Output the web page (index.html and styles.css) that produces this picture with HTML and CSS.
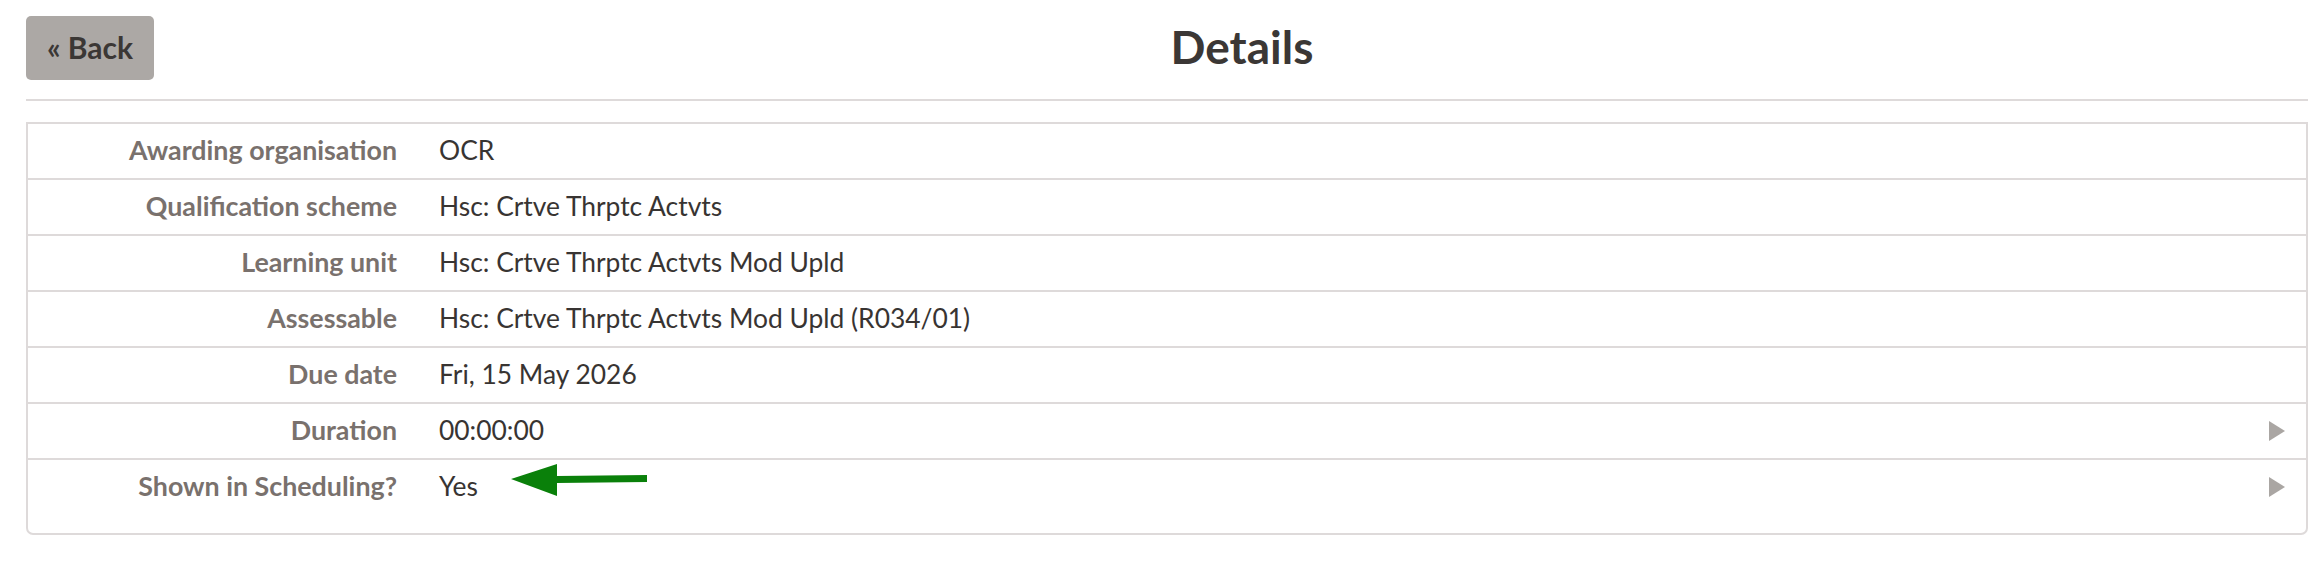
FILE: index.html
```html
<!DOCTYPE html>
<html lang="en">
<head>
<meta charset="utf-8">
<title>Details</title>
<link rel="stylesheet" href="styles.css">
</head>
<body>
<div class="page">
  <header class="header">
    <a class="back-btn" href="#">« Back</a>
    <h1 class="title">Details</h1>
  </header>
  <hr class="divider">
  <div class="details">
    <div class="row">
      <div class="label">Awarding organisation</div>
      <div class="value">OCR</div>
      <div class="action"></div>
    </div>
    <div class="row">
      <div class="label">Qualification scheme</div>
      <div class="value">Hsc: Crtve Thrptc Actvts</div>
      <div class="action"></div>
    </div>
    <div class="row">
      <div class="label">Learning unit</div>
      <div class="value">Hsc: Crtve Thrptc Actvts Mod Upld</div>
      <div class="action"></div>
    </div>
    <div class="row">
      <div class="label">Assessable</div>
      <div class="value">Hsc: Crtve Thrptc Actvts Mod Upld (R034/01)</div>
      <div class="action"></div>
    </div>
    <div class="row">
      <div class="label">Due date</div>
      <div class="value">Fri, 15 May 2026</div>
      <div class="action"></div>
    </div>
    <div class="row">
      <div class="label">Duration</div>
      <div class="value">00:00:00</div>
      <div class="action"><svg class="tri" width="16" height="20" viewBox="0 0 16 20"><polygon points="0,0 16,10 0,20"/></svg></div>
    </div>
    <div class="row row-last">
      <div class="label">Shown in Scheduling?</div>
      <div class="value">Yes</div>
      <div class="action"><svg class="tri" width="16" height="20" viewBox="0 0 16 20"><polygon points="0,0 16,10 0,20"/></svg></div>
      <svg class="annot-arrow" width="138" height="34" viewBox="0 0 138 34"><polygon points="0,16 46,1 46,13 136,12 136,19 46,20 46,33"/></svg>
    </div>
  </div>
</div>
</body>
</html>
```

FILE: styles.css
```css
html, body {
  margin: 0;
  padding: 0;
  background: #ffffff;
}

body {
  font-family: "Lato", "Noto Sans", sans-serif;
  color: #383432;
}

.page {
  padding: 16px 10px 0 26px;
}

.header {
  display: flex;
  align-items: center;
  height: 64px;
}

.back-btn {
  display: flex;
  align-items: center;
  justify-content: center;
  box-sizing: border-box;
  width: 128px;
  height: 64px;
  padding-bottom: 2px;
  background: #aca8a5;
  border-radius: 5px;
  color: #3b3735;
  font-size: 30px;
  font-weight: 700;
  text-decoration: none;
}

.title {
  flex: 1;
  margin: 0;
  padding: 0 0 3px 22px;
  text-align: center;
  font-size: 46px;
  font-weight: 700;
  color: #3b3735;
}

.divider {
  margin: 19px 0 0 0;
  border: 0;
  height: 2px;
  background: #dedada;
}

.details {
  margin-top: 21px;
  border: 2px solid #dedada;
  border-radius: 0 0 7px 7px;
}

.row {
  position: relative;
  display: grid;
  grid-template-columns: 369px 1fr 16px;
  column-gap: 42px;
  align-items: center;
  height: 54px;
  padding-right: 21px;
  font-size: 27px;
}

.row + .row {
  border-top: 2px solid #dedada;
}

.row-last {
  height: 54px;
  padding-bottom: 19px;
}

.label {
  margin-top: -3px;
  text-align: right;
  font-weight: 700;
  font-size: 26.8px;
  color: #79716d;
}

.value {
  margin-top: -3px;
  font-size: 26.4px;
  color: #383432;
}

.action {
  display: flex;
  align-items: center;
}

.tri {
  display: block;
  fill: #aaa6a3;
}

.annot-arrow {
  position: absolute;
  left: 483px;
  top: 3px;
  fill: #0a800a;
}
```
